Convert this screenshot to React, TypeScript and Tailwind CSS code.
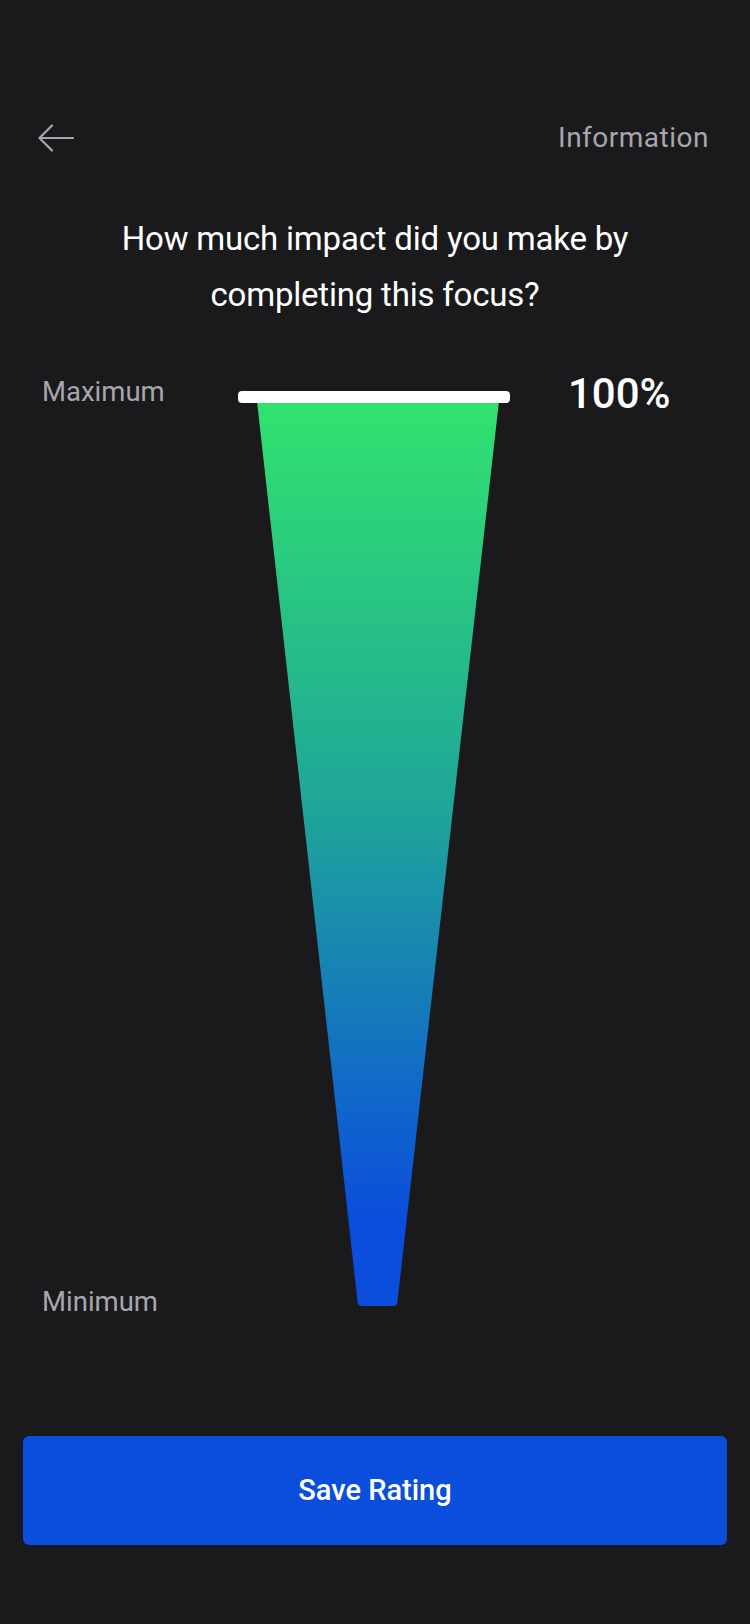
import React from "react"

function BackArrow() {
  return (
    <svg width="36" height="28" viewBox="0 0 36 28" fill="none">
      <path
        d="M35 14H2M14 1.5L1.5 14L14 26.5"
        stroke="#a6a6ad"
        strokeWidth="2.2"
        strokeLinecap="round"
        strokeLinejoin="round"
      />
    </svg>
  )
}

function Gauge() {
  return (
    <svg width="272" height="915" viewBox="0 0 272 915" className="mt-[19px] shrink-0">
      <defs>
        <linearGradient id="impact" x1="0" y1="0" x2="0" y2="1">
          <stop offset="0" stopColor="#31e36e" />
          <stop offset="0.45" stopColor="#1fa59a" />
          <stop offset="0.9" stopColor="#0b4edc" />
          <stop offset="1" stopColor="#0b4edc" />
        </linearGradient>
      </defs>
      <path
        d="M19 10 L261 10 L159.4 911 Q159 915 155 915 L124 915 Q120 915 119.6 911 Z"
        fill="url(#impact)"
      />
      <rect x="0" y="0" width="272" height="12" rx="4" fill="#ffffff" />
    </svg>
  )
}

export default function App() {
  return (
    <div
      className="w-[750px] h-[1624px] bg-[#1a1a1c] flex flex-col"
      style={{ fontFamily: "Roboto, 'Noto Sans', sans-serif" }}
    >
      <header className="mt-[110px] h-[56px] pl-[38px] pr-[41px] flex items-center justify-between">
        <button className="flex items-center">
          <BackArrow />
        </button>
        <span className="text-[28px] text-[#a6a6ad] tracking-[0.5px]">Information</span>
      </header>

      <h1 className="mt-[45px] text-center text-[33px] leading-[56px] text-white font-normal tracking-[-0.2px]">
        How much impact did you make by
        <br />
        completing this focus?
      </h1>

      <div className="mt-[49px] flex pl-[42px]">
        <div className="w-[196px] h-[950px] flex flex-col justify-between text-[27.5px] leading-[40px] text-[#a6a6ad]">
          <span>Maximum</span>
          <span>Minimum</span>
        </div>
        <Gauge />
        <div className="ml-[58px] text-[42px] leading-[44px] text-white font-medium">100%</div>
      </div>

      <button className="mt-[114px] mx-[23px] h-[109px] rounded-[6px] bg-[#0b4edc] text-white text-[29px] font-medium">
        Save Rating
      </button>
    </div>
  )
}
